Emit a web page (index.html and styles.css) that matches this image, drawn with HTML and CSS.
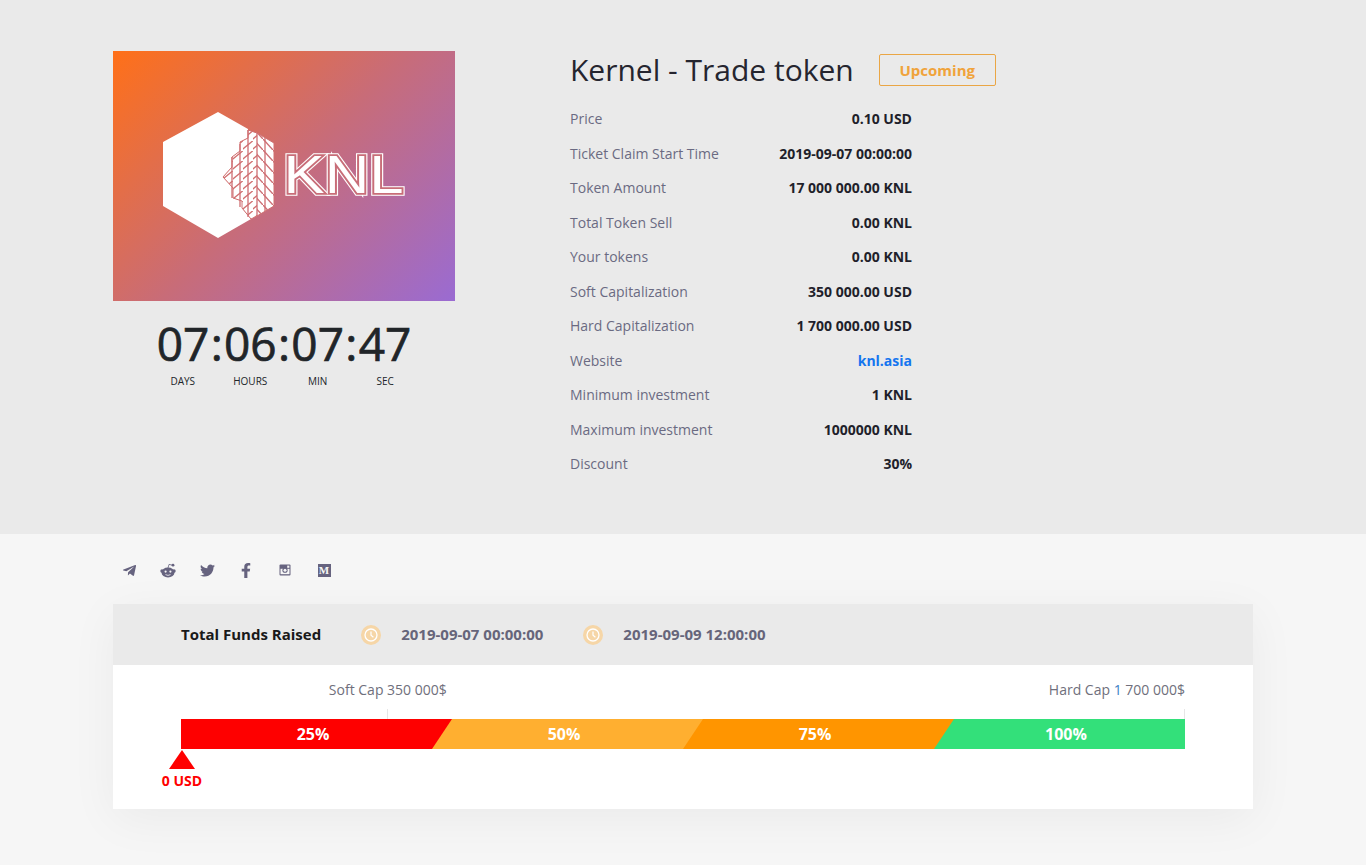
FILE: index.html
```html
<!DOCTYPE html>
<html lang="en">
<head>
    <meta charset="UTF-8">
    <meta name="viewport" content="width=device-width, initial-scale=1.0">
    <title>Kernel - Trade token</title>
    <link rel="stylesheet" href="styles.css">
</head>
<body>
    <section class="top">
        <div class="container top-row">
            <div class="left-col">
                <div class="logo-box">
                    <svg class="logo" width="342" height="250" viewBox="0 0 342 250">
                        <defs>
                            <pattern id="up" width="10" height="10" patternUnits="userSpaceOnUse">
                                <path d="M-1 8.8L11 -1.2" stroke="#d06f70" stroke-width="1.3" fill="none"/>
                            </pattern>
                            <pattern id="down" width="10" height="11" patternUnits="userSpaceOnUse">
                                <path d="M-1 -1.2L11 12.2" stroke="#cc6e74" stroke-width="1.3" fill="none"/>
                            </pattern>
                            <clipPath id="left-part">
                                <path d="M135 79L144 82V165L138 168L129 157V150L120 147V137L110 126L119 116V106L127 100V91L135 87Z"/>
                            </clipPath>
                            <clipPath id="right-part">
                                <path d="M144 82L161 92V155L144 165Z"/>
                            </clipPath>
                        </defs>
                        <path d="M105 61L135 78V87L127 91V100L119 106V116L110 126L120 137V147L129 150V157L138 168L105 187L50 155V91Z" fill="#fff"/>
                        <path d="M135 79L144 82L161 92V155L144 165L138 168L129 157V150L120 147V137L110 126L119 116V106L127 100V91L135 87Z" fill="#fff" stroke="#d06f70" stroke-width="1"/>
                        <rect x="100" y="70" width="45" height="105" fill="url(#up)" clip-path="url(#left-part)"/>
                        <rect x="144" y="70" width="20" height="105" fill="url(#down)" clip-path="url(#right-part)"/>
                        <path d="M119 106V147M127 93V156M135 79V166M144 82V165M152 87V160" stroke="#cf6e72" stroke-width="1.3" fill="none"/>
                        <g class="logo-text">
                            <text class="logo-outer" x="170.5" y="142" textLength="120" lengthAdjust="spacingAndGlyphs">KNL</text>
                            <text class="logo-gap" x="170.5" y="142" textLength="120" lengthAdjust="spacingAndGlyphs">KNL</text>
                            <text class="logo-inner" x="170.5" y="142" textLength="120" lengthAdjust="spacingAndGlyphs">KNL</text>
                        </g>
                    </svg>
                </div>
                <div class="timer">07<span>:</span>06<span>:</span>07<span>:</span>47</div>
                <div class="timer-labels">
                    <span>DAYS</span>
                    <span>HOURS</span>
                    <span>MIN</span>
                    <span>SEC</span>
                </div>
            </div>
            <div class="info">
                <div class="title-row">
                    <h1>Kernel - Trade token</h1>
                    <span class="badge">Upcoming</span>
                </div>
                <div class="row"><span>Price</span><b>0.10 USD</b></div>
                <div class="row"><span>Ticket Claim Start Time</span><b>2019-09-07 00:00:00</b></div>
                <div class="row"><span>Token Amount</span><b>17 000 000.00 KNL</b></div>
                <div class="row"><span>Total Token Sell</span><b>0.00 KNL</b></div>
                <div class="row"><span>Your tokens</span><b>0.00 KNL</b></div>
                <div class="row"><span>Soft Capitalization</span><b>350 000.00 USD</b></div>
                <div class="row"><span>Hard Capitalization</span><b>1 700 000.00 USD</b></div>
                <div class="row"><span>Website</span><a href="#">knl.asia</a></div>
                <div class="row"><span>Minimum investment</span><b>1 KNL</b></div>
                <div class="row"><span>Maximum investment</span><b>1000000 KNL</b></div>
                <div class="row"><span>Discount</span><b>30%</b></div>
            </div>
        </div>
    </section>

    <section class="bottom">
        <div class="container">
            <div class="socials">
                <a href="#"><svg width="15" height="15" viewBox="0 0 448 512"><path d="M446.7 98.6l-67.6 318.8c-5.1 22.5-18.4 28.1-37.3 17.5l-103-75.9-49.7 47.8c-5.5 5.5-10.1 10.1-20.7 10.1l7.4-104.9 190.9-172.5c8.3-7.4-1.8-11.5-12.9-4.1L117.8 284 16.2 252.2c-22.1-6.9-22.5-22.1 4.6-32.7L418.2 66.4c18.4-6.9 34.5 4.1 28.5 32.2z"/></svg></a>
                <a href="#"><svg width="16" height="15" viewBox="0 0 16 15">
                    <circle cx="2" cy="8" r="1.7"/><circle cx="14" cy="8" r="1.7"/>
                    <ellipse cx="8" cy="9.5" rx="6.5" ry="5"/>
                    <circle cx="13" cy="2.2" r="1.4"/>
                    <path d="M8 5L9 1.4L12.5 2.2" fill="none" stroke="#66637f" stroke-width=".8"/>
                    <circle cx="5.6" cy="8.6" r="1.1" fill="#f6f6f6"/><circle cx="10.4" cy="8.6" r="1.1" fill="#f6f6f6"/>
                    <path d="M5.5 11.6Q8 13.2 10.5 11.6" fill="none" stroke="#f6f6f6" stroke-width=".8"/>
                </svg></a>
                <a href="#"><svg width="15" height="15" viewBox="0 0 512 512"><path d="M459.37 151.716c.325 4.548.325 9.097.325 13.645 0 138.72-105.583 298.558-298.558 298.558-59.452 0-114.68-17.219-161.137-47.106 8.447.974 16.568 1.299 25.34 1.299 49.055 0 94.213-16.568 130.274-44.832-46.132-.975-84.792-31.188-98.112-72.772 6.498.974 12.995 1.624 19.818 1.624 9.421 0 18.843-1.3 27.614-3.573-48.081-9.747-84.143-51.98-84.143-102.985v-1.299c13.969 7.797 30.214 12.67 47.431 13.319-28.264-18.843-46.781-51.005-46.781-87.391 0-19.492 5.197-37.36 14.294-52.954 51.655 63.675 129.3 105.258 216.365 109.807-1.624-7.797-2.599-15.918-2.599-24.04 0-57.828 46.782-104.934 104.934-104.934 30.213 0 57.502 12.67 76.67 33.137 23.715-4.548 46.456-13.32 66.599-25.34-7.798 24.366-24.366 44.833-46.132 57.827 21.117-2.273 41.584-8.122 60.426-16.243-14.292 20.791-32.161 39.308-52.628 54.253z"/></svg></a>
                <a href="#"><svg width="10" height="15" viewBox="0 0 320 512" preserveAspectRatio="none"><path d="M279.14 288l14.22-92.66h-88.91v-60.13c0-25.35 12.42-50.06 52.24-50.06h40.42V6.26S260.43 0 225.36 0c-73.22 0-121.08 44.38-121.08 124.72v70.62H22.89V288h81.39v224h100.17V288z"/></svg></a>
                <a href="#"><svg width="12" height="12" viewBox="0 0 12 12">
                    <rect width="11" height="11" x=".5" y=".5" rx="1"/>
                    <rect x="1.5" y="4.8" width="9" height="5.4" fill="#f6f6f6"/>
                    <circle cx="6" cy="6.2" r="2.6" fill="#66637f"/>
                    <circle cx="6" cy="6.2" r="1.5" fill="#f6f6f6"/>
                    <rect x="8.2" y="1.6" width="2.2" height="2.2" fill="#f6f6f6"/>
                </svg></a>
                <a href="#"><span class="medium">M</span></a>
            </div>

            <div class="panel">
                <div class="panel-head">
                    <strong>Total Funds Raised</strong>
                    <span class="clock"><svg width="14" height="14" viewBox="0 0 14 14"><circle cx="7" cy="7" r="6" fill="none" stroke="#fff" stroke-width="1.3"/><path d="M7 3.4V7.2L9.4 9.2" fill="none" stroke="#fff" stroke-width="1.2"/></svg></span>
                    <span class="date">2019-09-07 00:00:00</span>
                    <span class="clock"><svg width="14" height="14" viewBox="0 0 14 14"><circle cx="7" cy="7" r="6" fill="none" stroke="#fff" stroke-width="1.3"/><path d="M7 3.4V7.2L9.4 9.2" fill="none" stroke="#fff" stroke-width="1.2"/></svg></span>
                    <span class="date">2019-09-09 12:00:00</span>
                </div>
                <div class="panel-body">
                    <div class="caps">
                        <div class="cap cap-soft" style="left: 20.5%">
                            <span>Soft Cap 350 000$</span>
                        </div>
                        <div class="cap cap-hard" style="left: 100%">
                            <span>Hard Cap <em>1</em> 700 000$</span>
                        </div>
                    </div>
                    <div class="bar">
                        <div class="seg seg-red">25%</div>
                        <div class="seg seg-yellow">50%</div>
                        <div class="seg seg-orange">75%</div>
                        <div class="seg seg-green">100%</div>
                        <div class="marker">
                            <i></i>
                            <span>0 USD</span>
                        </div>
                    </div>
                </div>
            </div>
        </div>
    </section>
</body>
</html>
```

FILE: styles.css
```css
* {
    box-sizing: border-box;
}
body {
    margin: 0;
    font-family: "Open Sans", Arial, sans-serif;
    font-size: 14px;
    color: #212529;
    background-color: #f6f6f6;
}
.container {
    width: 1140px;
    margin: 0 auto;
}

/* top block */
.top {
    height: 534px;
    padding-top: 51px;
    background-color: #eaeaea;
}
.top-row {
    display: flex;
    gap: 115px;
}
.left-col {
    width: 342px;
}
.logo-box {
    height: 250px;
    background: linear-gradient(135deg, #ff7018 0%, #c86c78 50%, #9a6bd2 100%);
}
.logo {
    display: block;
}
.logo-text text {
    font-family: "Liberation Sans", Arial, sans-serif;
    font-size: 54.5px;
}
.logo-outer {
    fill: #fff;
    stroke: #fff;
    stroke-width: 5.5px;
}
.logo-gap {
    fill: #c86d78;
    stroke: #c86d78;
    stroke-width: 3.5px;
}
.logo-inner {
    fill: #fff;
}
.timer {
    margin-top: 13px;
    font-size: 46px;
    line-height: 58px;
    text-align: center;
    white-space: nowrap;
    color: #212529;
    -webkit-text-stroke: 0.7px #212529;
}
.timer span {
    margin: 0 1.3px;
}
.timer-labels {
    display: grid;
    grid-template-columns: repeat(4, 67.5px);
    justify-content: center;
    margin-top: 2px;
    font-size: 10px;
    line-height: 14px;
    text-align: center;
}

/* info table */
.info {
    width: 342px;
}
.title-row {
    display: flex;
    align-items: flex-start;
    height: 50.3px;
    white-space: nowrap;
}
.title-row h1 {
    margin: 0 25px 0 0;
    font-size: 30px;
    font-weight: 400;
    line-height: 38px;
    color: #25252f;
}
.badge {
    flex: none;
    width: 117px;
    height: 32px;
    margin-top: 3px;
    border: 1px solid #eaa645;
    border-radius: 2px;
    font-size: 15px;
    font-weight: 700;
    line-height: 30px;
    text-align: center;
    color: #f0a33b;
}
.row {
    display: flex;
    justify-content: space-between;
    align-items: center;
    height: 34.5px;
    color: #6a6a82;
}
.row b {
    color: #1f1f2b;
}
.row a {
    font-weight: 700;
    color: #1575ef;
    text-decoration: none;
}

/* socials */
.bottom {
    padding-top: 28px;
    padding-bottom: 56px;
}
.socials {
    display: flex;
    height: 42px;
    margin-left: -3.5px;
}
.socials a {
    display: flex;
    justify-content: center;
    align-items: center;
    width: 39px;
    height: 16px;
    text-decoration: none;
}
.socials svg {
    display: block;
    fill: #66637f;
}
.medium {
    display: block;
    width: 13px;
    height: 13px;
    background-color: #66637f;
    font-family: "Liberation Serif", serif;
    font-size: 11px;
    font-weight: 700;
    line-height: 13px;
    text-align: center;
    color: #f6f6f6;
}

/* funds panel */
.panel {
    background-color: #fff;
    box-shadow: 0 10px 45px rgba(0, 0, 0, 0.05);
}
.panel-head {
    display: flex;
    align-items: center;
    height: 61px;
    padding-left: 68px;
    background-color: #eaeaea;
}
.panel-head strong {
    margin: 0 40px 2px 0;
    font-size: 15px;
    font-weight: 700;
    color: #191919;
}
.clock {
    display: flex;
    justify-content: center;
    align-items: center;
    width: 20px;
    height: 20px;
    margin-right: 20px;
    border-radius: 50%;
    background-color: #f6d6a7;
}
.date {
    margin: 0 40px 2px 0;
    font-size: 15px;
    font-weight: 700;
    color: #66657a;
}
.panel-body {
    height: 144px;
    padding: 14px 68px 0;
}
.caps {
    position: relative;
    height: 40px;
}
.cap {
    position: absolute;
    top: 0;
    height: 40px;
    border-left: 1px solid #e6e6e6;
}
.cap::before {
    content: "";
    position: absolute;
    top: 0;
    left: -1px;
    width: 1px;
    height: 30px;
    background-color: #fff;
}
.cap span {
    position: absolute;
    top: 1px;
    font-size: 14px;
    line-height: 20px;
    white-space: nowrap;
    color: #6f6f7c;
}
.cap-soft span {
    left: 0;
    transform: translateX(-50%);
}
.cap-hard {
    margin-left: -1px;
}
.cap-hard span {
    right: 0;
}
.cap em {
    font-style: normal;
    color: #3d7fc4;
}
.bar {
    position: relative;
    display: flex;
    height: 30px;
}
.seg {
    position: relative;
    flex: 1;
    padding-left: 13px;
    font-size: 16px;
    font-weight: 700;
    line-height: 30px;
    text-align: center;
    color: #fff;
}
.seg::after {
    content: "";
    position: absolute;
    top: 0;
    left: 100%;
    z-index: 1;
    width: 20px;
    height: 30px;
    background-color: inherit;
    clip-path: polygon(0 0, 100% 0, 0 100%);
}
.seg-red {
    background-color: #fe0000;
}
.seg-yellow {
    background-color: #ffaf30;
}
.seg-orange {
    background-color: #ff9500;
}
.seg-green {
    background-color: #33e07a;
}
.seg-green::after {
    display: none;
}
.marker {
    position: absolute;
    top: 100%;
    left: 0;
    width: 60px;
    margin-left: -29px;
    margin-top: 1px;
    text-align: center;
    color: #f00;
}
.marker i {
    display: block;
    width: 26px;
    height: 19px;
    margin: 0 auto;
    background-color: #f00;
    clip-path: polygon(50% 0, 100% 100%, 0 100%);
}
.marker span {
    display: block;
    margin-top: 2px;
    font-size: 14px;
    font-weight: 700;
    line-height: 20px;
    white-space: nowrap;
}
```
